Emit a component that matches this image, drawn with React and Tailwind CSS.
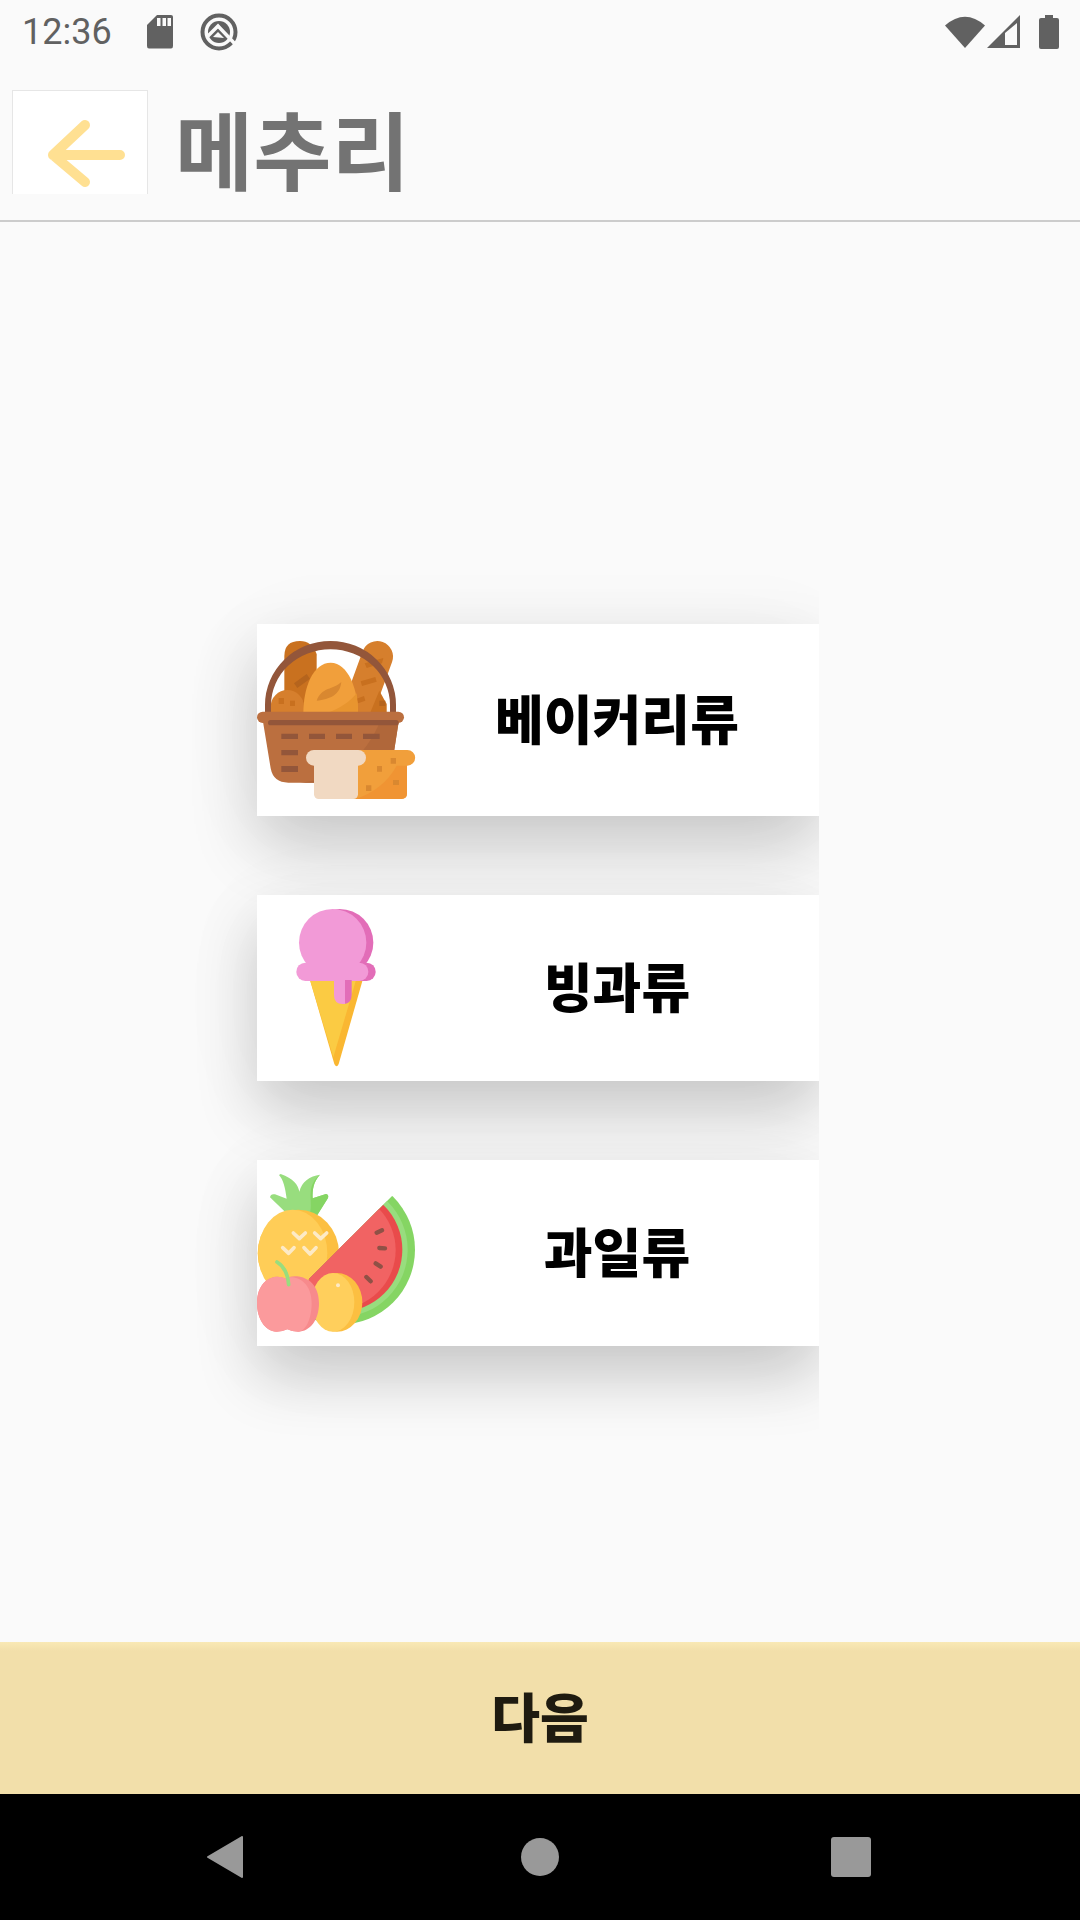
const KR = { fontFamily: '"Noto Sans CJK KR", sans-serif' };

function Basket() {
  return (
    <svg width="160" height="192" viewBox="261 132 480 576" className="block shrink-0">
      <path d="M343 400V228Q343 183 390 183Q425 183 440 222V400Z" fill="#c9711f" />
      <path d="M372 310L410 282L420 296L382 324Z" fill="#b5641d" />
      <path d="M622 230L560 400" stroke="#d67f2d" strokeWidth="94" strokeLinecap="round" />
      <path d="M584 250L640 234L636 250L590 264ZM572 304L616 291L620 305L576 318ZM560 356L582 348L586 362L564 370Z" fill="#c8701f" />
      <path d="M600 400L628 332L650 372V400Z" fill="#c9711f" />
      <rect x="628" y="362" width="18" height="16" fill="#b5641d" />
      <path d="M302 400V380A50 50 0 0 1 402 380V400Z" fill="#d67f2d" />
      <rect x="326" y="354" width="16" height="18" fill="#c8701f" />
      <rect x="360" y="362" width="15" height="16" fill="#c8701f" />
      <path d="M400 400C400 320 430 248 482 248C535 248 564 330 564 400Z" fill="#f19f3b" />
      <path d="M470 400C510 385 540 365 560 340Q564 370 564 400Z" fill="#e8952f" />
      <path d="M440 362C455 320 490 330 514 306C510 345 480 358 440 362Z" fill="#d98830" />
      <path d="M285 400V375A196.500 192 0 0 1 678 375V400H660V375A178 167 0 0 0 303 375V400Z" fill="#93563a" />
      <path d="M279 425H686L665 560Q660 608 610 608H355Q310 608 302 565Z" fill="#bb6f3f" />
      <path d="M630 425H686L665 560Q660 608 610 608H390Q560 590 630 425Z" fill="#b0673a" />
      <rect x="261" y="395" width="441" height="34" rx="17" fill="#bb6f3f" />
      <rect x="294" y="420" width="392" height="16" rx="8" fill="#93563a" />
      <path d="M334 461H384V477H334ZM417 461H465V477H417ZM498 461H546V477H498ZM579 461H629V477H579ZM334 510H384V526H334ZM334 558H384V576H334Z" fill="#93563a" />
      <path d="M540 510H712A23.500 23.500 0 0 1 712 557H711V640Q711 657 694 657H540Z" fill="#f19f3b" />
      <path d="M680 557H711V640Q711 657 694 657H555Q640 630 680 557Z" fill="#f09433" />
      <path d="M662 534H678V551H662ZM621 558H636V575H621ZM669 600H687V615H669ZM588 616H604V633H588Z" fill="#d98830" />
      <rect x="408" y="510" width="180" height="47" rx="23.500" fill="#f1d9c2" />
      <rect x="432" y="530" width="132" height="127" rx="14" fill="#f1d9c2" />
    </svg>
  );
}

function IceCream() {
  return (
    <svg width="158" height="186" viewBox="81 45 474 558" className="block shrink-0">
      <path d="M240 300H398L326 552Q320 566 313 552Z" fill="#fab732" />
      <path d="M240 300H378L310 532Z" fill="#fbcb43" />
      <circle cx="329" cy="188" r="101" fill="#e26db8" />
      <rect x="300" y="248" width="137" height="55" rx="27" fill="#e26db8" />
      <circle cx="308" cy="188" r="101" fill="#f29ad7" />
      <rect x="199" y="248" width="216" height="55" rx="27" fill="#f29ad7" />
      <path d="M330 300H365V345Q365 372 338 372Z" fill="#e26db8" />
      <path d="M312 300H345V372H338Q312 372 312 345Z" fill="#f29ad7" />
    </svg>
  );
}

function Fruits() {
  return (
    <svg width="158" height="186" viewBox="81 30 474 558" className="block shrink-0">
      <defs>
        <clipPath id="melon">
          <path d="M236 388L487 137L700 137V700H236Z" />
        </clipPath>
      </defs>
      <path d="M175 195L120 142Q122 130 135 133L170 146C165 110 160 90 147 75L152 72C190 85 205 105 208 125C215 95 240 78 270 74C250 95 247 120 248 145L288 132Q297 134 294 144L262 195Z" fill="#98dd7e" />
      <path d="M270 74C250 95 247 120 248 145L288 132Q297 134 294 144L262 195L240 190C250 150 225 110 270 74Z" fill="#85d563" />
      <ellipse cx="205" cy="310" rx="122" ry="131" fill="#fcbf41" />
      <ellipse cx="188" cy="310" rx="104" ry="131" fill="#ffcd57" />
      <path d="M190 249L208 266L226 249M254 249L272 266L290 249M158 293L176 310L192 293M222 293L240 312L258 293" fill="none" stroke="#fdeac6" strokeWidth="11" strokeLinecap="round" strokeLinejoin="round" />
      <g clipPath="url(#melon)">
        <circle cx="331" cy="299" r="224" fill="#85d563" />
        <circle cx="331" cy="299" r="202" fill="#98dd7e" />
        <circle cx="331" cy="299" r="186" fill="#e94b4b" />
        <circle cx="320" cy="300" r="177" fill="#f16363" />
      </g>
      <path d="M440 248L456 241M448 294L465 295M437 340L452 350M409 381L422 394" stroke="#8f5146" strokeWidth="13" strokeLinecap="round" />
      <ellipse cx="321" cy="457" rx="76" ry="88" fill="#fcbf41" />
      <ellipse cx="309" cy="457" rx="64" ry="88" fill="#ffcf5c" />
      <circle cx="324" cy="406" r="6" fill="#fdeac6" />
      <path d="M165 386C190 370 267 375 267 460C267 510 240 545 205 545Q185 545 172 538Q158 545 140 545C105 545 81 505 81 460C81 385 140 370 165 386Z" fill="#f78a8c" />
      <path d="M165 386C185 374 245 385 245 460C245 510 225 545 205 545Q185 545 172 538Q158 545 140 545C105 545 81 505 81 460C81 385 140 370 165 386Z" fill="#fb9a9c" />
      <path d="M141 336Q172 355 176 404" fill="none" stroke="#98dd7e" strokeWidth="11" strokeLinecap="round" />
    </svg>
  );
}

function Card({ h, label, children }) {
  return (
    <div className={`flex items-center bg-white shadow-[0_30px_62px_rgba(0,0,0,0.19),0_10px_100px_rgba(0,0,0,0.04)] ${h}`}>
      <div className="w-[158px] shrink-0">{children}</div>
      <div className="flex-1 pb-[6px] text-center text-[53px] font-black leading-none text-black" style={KR}>
        {label}
      </div>
    </div>
  );
}

export default function App() {
  return (
    <div className="flex h-[1920px] w-[1080px] flex-col overflow-hidden bg-[#fafafa]">
      <div className="flex h-[63px] shrink-0 items-center pl-[22px] pr-[21px] text-[#616161]">
        <span className="pt-[1px] text-[36px] leading-none" style={{ fontFamily: 'Roboto, sans-serif' }}>12:36</span>
        <svg width="26" height="34" viewBox="0 0 26 34" className="ml-[35px]">
          <path d="M10 0H24Q26 0 26 2V31Q26 33.500 24 33.500H2Q0 33.500 0 31V10Z" fill="#616161" />
          <path d="M10 3H13.500V11H10ZM15.500 3H19V11H15.500ZM20.500 3H24V11H20.500Z" fill="#fafafa" />
        </svg>
        <svg width="38" height="38" viewBox="0 0 38 38" className="ml-[27px]">
          <circle cx="19" cy="19" r="16.500" fill="none" stroke="#616161" strokeWidth="4" />
          <circle cx="19" cy="19" r="11" fill="#616161" />
          <path d="M7 24L18 13L36 32" fill="none" stroke="#fafafa" strokeWidth="3.500" />
          <path d="M13 24L18 19L24 25Z" fill="#fafafa" />
        </svg>
        <div className="flex-1" />
        <svg width="40" height="33" viewBox="0 0 40 33">
          <path d="M0 10.500Q20 -7 40 10.500L20 33Z" fill="#616161" />
        </svg>
        <svg width="33" height="33" viewBox="0 0 33 33" className="ml-[2px]">
          <path d="M33 0V33H0Z" fill="#616161" />
          <path d="M30 8V30H18V18Z" fill="#fafafa" />
        </svg>
        <svg width="20" height="34" viewBox="0 0 20 34" className="ml-[19px]">
          <path d="M6 0H14V3H18Q20 3 20 5V32Q20 34 18 34H2Q0 34 0 32V5Q0 3 2 3H6Z" fill="#616161" />
        </svg>
      </div>

      <div className="flex h-[159px] shrink-0 items-start border-b-2 border-[#cccccc] pl-[12px]">
        <div className="mt-[27px] flex h-[104px] w-[136px] items-start border-x border-t border-[#e6e6e6] bg-white">
          <svg width="134" height="102" viewBox="0 0 134 102">
            <path d="M40 64L72 34M40 64L72 91M40 64H107" fill="none" stroke="#ffe092" strokeWidth="10" strokeLinecap="round" strokeLinejoin="round" />
          </svg>
        </div>
        <div className="ml-[27px] mt-[41px] text-[85px] font-bold leading-none text-[#737373]" style={KR}>메추리</div>
      </div>

      <div className="flex-1 pl-[150px] pt-[353px]">
        <div className="flex h-[883px] w-[669px] flex-col gap-[79px] overflow-hidden pl-[107px] pt-[49px]">
          <Card h="h-[192px] shrink-0" label="베이커리류"><Basket /></Card>
          <Card h="h-[186px] shrink-0" label="빙과류"><IceCream /></Card>
          <Card h="h-[186px] shrink-0" label="과일류"><Fruits /></Card>
        </div>
      </div>

      <div className="flex h-[152px] shrink-0 flex-col bg-[#f2dfaa]">
        <div className="h-[9px] bg-linear-to-b from-[#f9e9b5] to-[#f2dfaa]" />
        <div className="flex flex-1 items-center justify-center pb-[15px] text-[53px] font-black leading-none text-[#1f1b10]" style={KR}>다음</div>
      </div>

      <div className="flex h-[126px] shrink-0 items-center bg-black pl-[207px]">
        <svg width="36" height="42" viewBox="0 0 36 42">
          <path d="M35 1V41L1 21Z" fill="#999999" stroke="#999999" strokeWidth="2" strokeLinejoin="round" />
        </svg>
        <div className="ml-[278px] h-[38px] w-[38px] rounded-full bg-[#999999]" />
        <div className="ml-[272px] h-[40px] w-[40px] rounded-[3px] bg-[#999999]" />
      </div>
    </div>
  );
}
